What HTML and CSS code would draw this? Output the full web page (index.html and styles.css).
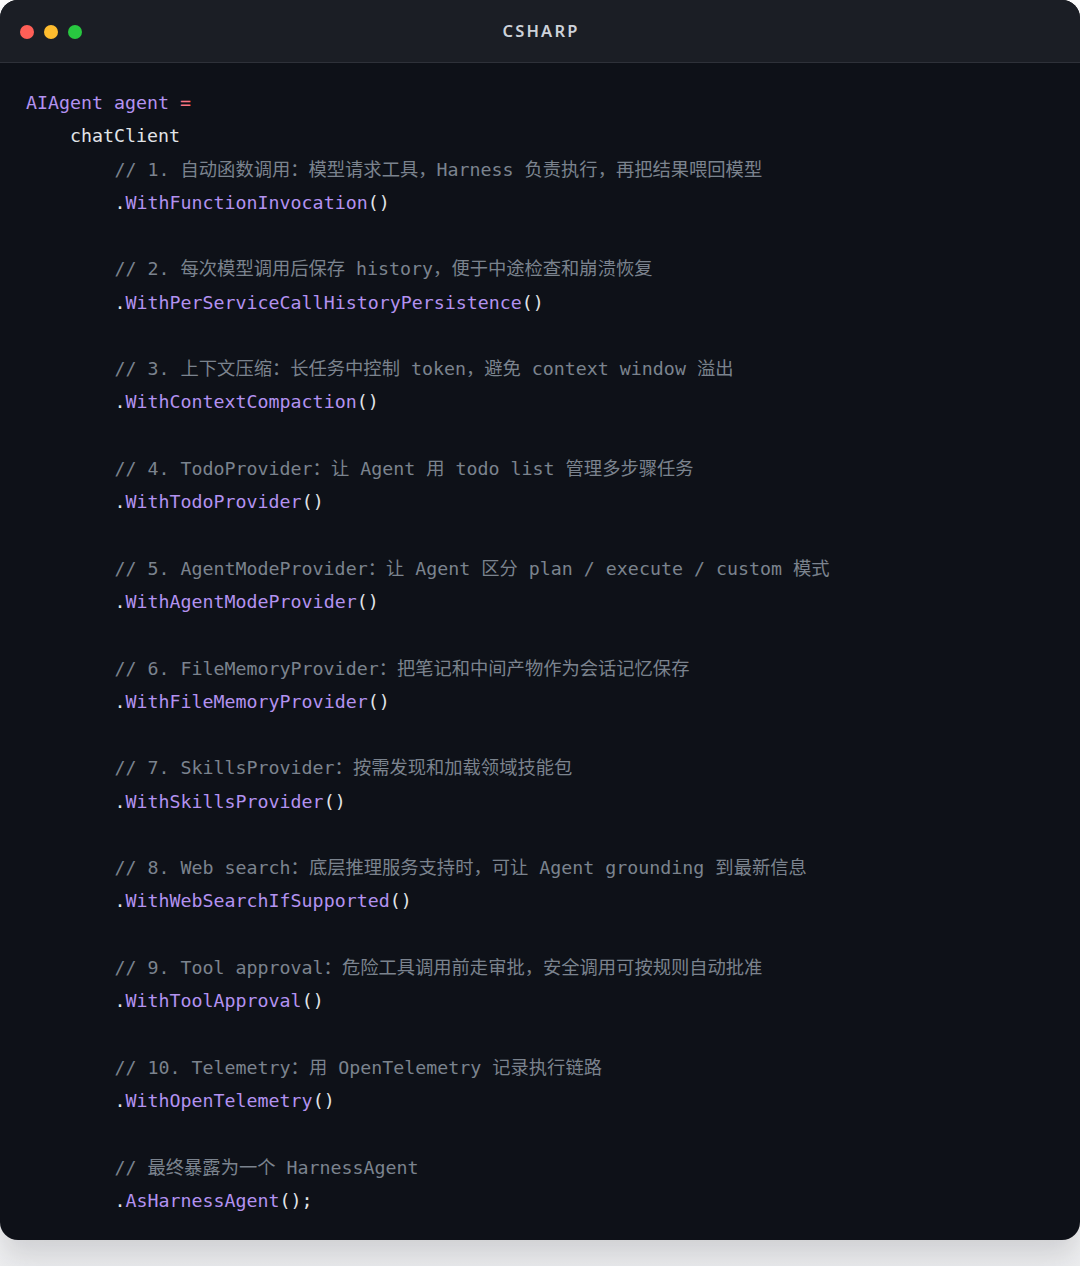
FILE: index.html
```html
<!DOCTYPE html>
<html lang="zh-CN">
<head>
<meta charset="utf-8">
<title>CSHARP</title>
<link rel="stylesheet" href="styles.css">
</head>
<body>
<div class="card">
  <div class="header">
    <div class="dots">
      <span class="dot red"></span>
      <span class="dot yellow"></span>
      <span class="dot green"></span>
    </div>
    <div class="title">CSHARP</div>
  </div>
  <div class="code">
    <div class="line"><span class="pu">AIAgent agent</span> <span class="op">=</span></div>
    <div class="line i1"><span class="tx">chatClient</span></div>

    <div class="line i2 cm">// 1. 自动函数调用：模型请求工具，Harness 负责执行，再把结果喂回模型</div>
    <div class="line i2">.<span class="pu">WithFunctionInvocation</span>()</div>
    <div class="blank"></div>

    <div class="line i2 cm">// 2. 每次模型调用后保存 history，便于中途检查和崩溃恢复</div>
    <div class="line i2">.<span class="pu">WithPerServiceCallHistoryPersistence</span>()</div>
    <div class="blank"></div>

    <div class="line i2 cm">// 3. 上下文压缩：长任务中控制 token，避免 context window 溢出</div>
    <div class="line i2">.<span class="pu">WithContextCompaction</span>()</div>
    <div class="blank"></div>

    <div class="line i2 cm">// 4. TodoProvider：让 Agent 用 todo list 管理多步骤任务</div>
    <div class="line i2">.<span class="pu">WithTodoProvider</span>()</div>
    <div class="blank"></div>

    <div class="line i2 cm">// 5. AgentModeProvider：让 Agent 区分 plan / execute / custom 模式</div>
    <div class="line i2">.<span class="pu">WithAgentModeProvider</span>()</div>
    <div class="blank"></div>

    <div class="line i2 cm">// 6. FileMemoryProvider：把笔记和中间产物作为会话记忆保存</div>
    <div class="line i2">.<span class="pu">WithFileMemoryProvider</span>()</div>
    <div class="blank"></div>

    <div class="line i2 cm">// 7. SkillsProvider：按需发现和加载领域技能包</div>
    <div class="line i2">.<span class="pu">WithSkillsProvider</span>()</div>
    <div class="blank"></div>

    <div class="line i2 cm">// 8. Web search：底层推理服务支持时，可让 Agent grounding 到最新信息</div>
    <div class="line i2">.<span class="pu">WithWebSearchIfSupported</span>()</div>
    <div class="blank"></div>

    <div class="line i2 cm">// 9. Tool approval：危险工具调用前走审批，安全调用可按规则自动批准</div>
    <div class="line i2">.<span class="pu">WithToolApproval</span>()</div>
    <div class="blank"></div>

    <div class="line i2 cm">// 10. Telemetry：用 OpenTelemetry 记录执行链路</div>
    <div class="line i2">.<span class="pu">WithOpenTelemetry</span>()</div>
    <div class="blank"></div>

    <div class="line i2 cm">// 最终暴露为一个 HarnessAgent</div>
    <div class="line i2">.<span class="pu">AsHarnessAgent</span>();</div>
  </div>
</div>
</body>
</html>
```

FILE: styles.css
```css
html, body {
  margin: 0;
  padding: 0;
}

body {
  width: 1080px;
  height: 1266px;
  background: linear-gradient(#ffffff 0, #ffffff 1200px, #eeeff1 1266px);
  overflow: hidden;
}

.card {
  width: 1080px;
  height: 1240px;
  background: #0e1118;
  border-radius: 18px;
  overflow: hidden;
  box-shadow: 0 14px 30px rgba(20, 24, 32, 0.18);
  display: flex;
  flex-direction: column;
}

.header {
  height: 62px;
  flex: none;
  background: #1b1e25;
  border-bottom: 1px solid #2e3139;
  display: flex;
  align-items: center;
  justify-content: center;
  position: relative;
}

.dots {
  position: absolute;
  left: 20px;
  top: 25px;
  display: flex;
  gap: 10px;
}

.dot {
  width: 14px;
  height: 14px;
  border-radius: 50%;
  display: block;
}

.red { background: #ff5f57; }
.yellow { background: #febc2e; }
.green { background: #28c840; }

.title {
  font-family: "Noto Sans", "DejaVu Sans", sans-serif;
  font-weight: 600;
  font-size: 16.5px;
  letter-spacing: 2.2px;
  color: #cdd2da;
  margin-top: -2px;
  padding-left: 2px;
}

.code {
  padding: 23px 20px 0 26px;
  font-family: "DejaVu Sans Mono", "Noto Sans CJK SC", monospace;
  font-size: 18.3px;
  line-height: 33.27px;
  color: #e1e4e8;
  display: flex;
  flex-direction: column;
}

.line {
  white-space: pre;
  height: 33.27px;
}

.blank {
  height: 33.27px;
}

.i1 { padding-left: 44px; }
.i2 { padding-left: 88.5px; }

.pu { color: #b392f0; }
.op { color: #f97583; }
.tx { color: #e1e4e8; }
.cm { color: #7b838e; }
```
